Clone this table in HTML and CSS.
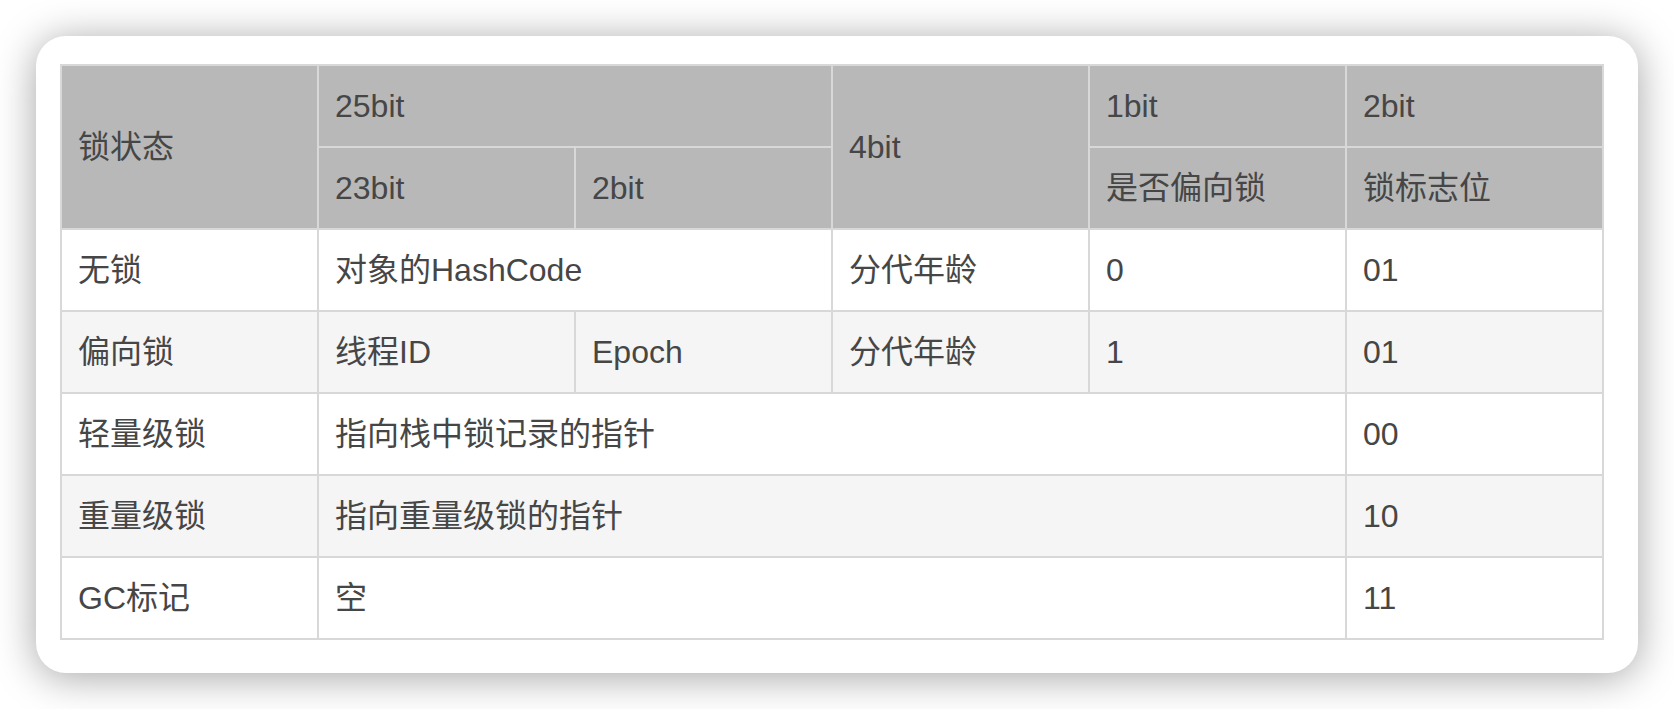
FILE: index.html
```html
<!DOCTYPE html>
<html lang="zh-CN">
<head>
<meta charset="utf-8">
<title>Mark Word</title>
<link rel="stylesheet" href="styles.css">
</head>
<body>
<div class="page">
  <div class="card">
    <table class="mark">
      <colgroup>
        <col class="c"><col class="c"><col class="c"><col class="c"><col class="c"><col class="c">
      </colgroup>
      <thead>
        <tr>
          <th rowspan="2">锁状态</th>
          <th colspan="2">25bit</th>
          <th rowspan="2">4bit</th>
          <th>1bit</th>
          <th>2bit</th>
        </tr>
        <tr>
          <th>23bit</th>
          <th>2bit</th>
          <th>是否偏向锁</th>
          <th>锁标志位</th>
        </tr>
      </thead>
      <tbody>
        <tr>
          <td>无锁</td>
          <td colspan="2">对象的HashCode</td>
          <td>分代年龄</td>
          <td>0</td>
          <td>01</td>
        </tr>
        <tr>
          <td>偏向锁</td>
          <td>线程ID</td>
          <td>Epoch</td>
          <td>分代年龄</td>
          <td>1</td>
          <td>01</td>
        </tr>
        <tr>
          <td>轻量级锁</td>
          <td colspan="4">指向栈中锁记录的指针</td>
          <td>00</td>
        </tr>
        <tr>
          <td>重量级锁</td>
          <td colspan="4">指向重量级锁的指针</td>
          <td>10</td>
        </tr>
        <tr>
          <td>GC标记</td>
          <td colspan="4">空</td>
          <td>11</td>
        </tr>
      </tbody>
    </table>
  </div>
</div>
</body>
</html>
```

FILE: styles.css
```css
html, body {
  margin: 0;
  padding: 0;
  background: #ffffff;
}

.page {
  padding: 36px;
}

.card {
  box-sizing: border-box;
  width: 1602px;
  padding: 28px 36px 33px 24px;
  background: #ffffff;
  border-radius: 30px;
  box-shadow: 0 4px 40px rgba(0, 0, 0, 0.36);
}

.mark {
  width: 1542px;
  table-layout: fixed;
  border-collapse: collapse;
  font-family: "Liberation Sans", "Noto Sans CJK SC", sans-serif;
  font-size: 32px;
  line-height: 48px;
  color: #464646;
}

.mark .c {
  width: 257px;
}

.mark th,
.mark td {
  border: 2px solid #d8d8d8;
  padding: 16px 16px;
  text-align: left;
  vertical-align: middle;
  font-weight: normal;
  white-space: nowrap;
}

.mark th {
  background: #b8b8b8;
}

.mark tbody tr:nth-child(odd) td {
  background: #ffffff;
}

.mark tbody tr:nth-child(even) td {
  background: #f5f5f5;
}
```
